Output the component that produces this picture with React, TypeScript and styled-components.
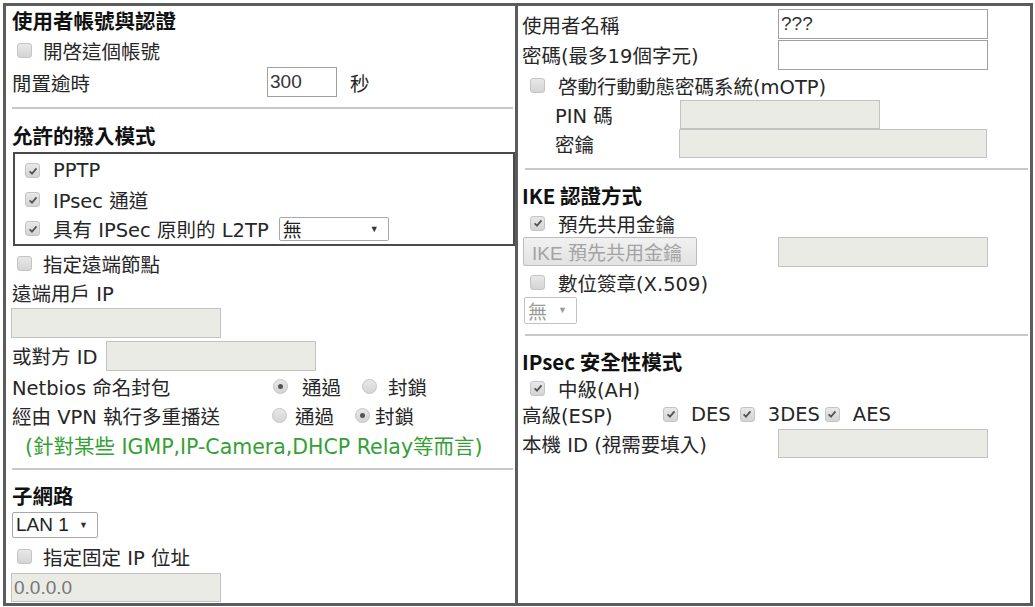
import React from "react"
import styled, { createGlobalStyle } from "styled-components"

const GlobalStyle = createGlobalStyle`
  html, body {
    margin: 0;
    padding: 0;
    background: #fff;
  }
  body {
    font-family: "DejaVu Sans", "Noto Sans CJK TC", sans-serif;
    font-size: 19.5px;
    color: #262626;
  }
`

const Frame = styled.div`
  box-sizing: border-box;
  width: 1030px;
  height: 603px;
  margin: 3px 0 0 3px;
  border: 3px solid #5c5c5c;
  display: grid;
  grid-template-columns: 512px 1fr;
`

const Column = styled.div<{ $pad: string; $divider?: boolean }>`
  box-sizing: border-box;
  display: flex;
  flex-direction: column;
  padding: ${(p) => p.$pad};
  border-right: ${(p) => (p.$divider ? "3px solid #5c5c5c" : "none")};
  min-width: 0;
  overflow: hidden;
`

const Title = styled.div<{ $h: number }>`
  display: flex;
  align-items: center;
  height: ${(p) => p.$h}px;
  flex-shrink: 0;
  font-family: "Noto Sans CJK TC", sans-serif;
  font-weight: 700;
  font-size: 20.5px;
  color: #111;
  white-space: nowrap;
`

const Row = styled.div<{ $h: number; $indent?: number }>`
  display: flex;
  align-items: center;
  height: ${(p) => p.$h}px;
  padding-left: ${(p) => p.$indent ?? 0}px;
  flex-shrink: 0;
  white-space: nowrap;
`

const Label = styled.span<{ $w?: number }>`
  display: inline-block;
  width: ${(p) => (p.$w ? `${p.$w}px` : "auto")};
  flex-shrink: 0;
`

const Divider = styled.div<{ $top: number; $bottom: number; $left?: number }>`
  height: 2px;
  flex-shrink: 0;
  background: #c8c8c8;
  margin: ${(p) => p.$top}px 0 ${(p) => p.$bottom}px ${(p) => p.$left ?? 0}px;
`

const ModeBox = styled.div`
  box-sizing: border-box;
  height: 94px;
  flex-shrink: 0;
  margin: 0 -2px 0 1px;
  border: 2px solid #4a4a4a;
  padding: 2px 0 1px 10px;
  display: flex;
  flex-direction: column;
`

const Mark = styled.span<{ $lead?: number; $gap?: number; $round?: boolean }>`
  box-sizing: border-box;
  display: inline-flex;
  align-items: center;
  justify-content: center;
  width: 15px;
  height: 15px;
  flex-shrink: 0;
  margin-left: ${(p) => p.$lead ?? 0}px;
  margin-right: ${(p) => p.$gap ?? 13}px;
  border: 1px solid #c4c4c4;
  border-radius: ${(p) => (p.$round ? "50%" : "3px")};
  background: linear-gradient(#e8e8e8, #d4d4d4);
`

const Dot = styled.span`
  width: 5px;
  height: 5px;
  border-radius: 50%;
  background: #555;
`

function Check({ on, lead, gap }: { on?: boolean; lead?: number; gap?: number }) {
  return (
    <Mark $lead={lead} $gap={gap}>
      {on && (
        <svg width="10" height="10" viewBox="0 0 10 10">
          <path d="M1.6 5.3 L4 7.6 L8.5 2.3" stroke="#555" strokeWidth="1.8" fill="none" />
        </svg>
      )}
    </Mark>
  )
}

function Radio({ on, lead, gap }: { on?: boolean; lead?: number; gap?: number }) {
  return (
    <Mark $round $lead={lead} $gap={gap}>
      {on && <Dot />}
    </Mark>
  )
}

const TextBox = styled.input<{ $w: number; $h: number; $lead?: number }>`
  box-sizing: border-box;
  width: ${(p) => p.$w}px;
  height: ${(p) => p.$h}px;
  margin: 0 0 0 ${(p) => p.$lead ?? 0}px;
  padding: 0 2px;
  flex-shrink: 0;
  border: 1px solid #a0a0a0;
  border-radius: 0;
  background: #fff;
  font-family: "Liberation Sans", "Noto Sans CJK TC", sans-serif;
  font-size: 19px;
  color: #333;
  outline: none;

  &:disabled {
    background: #ebebe6;
    border-color: #c2c2c2;
    color: #777;
  }
`

const Drop = styled.span<{ $w: number; $h: number; $lead?: number; $off?: boolean }>`
  box-sizing: border-box;
  display: inline-flex;
  align-items: center;
  justify-content: space-between;
  width: ${(p) => p.$w}px;
  height: ${(p) => p.$h}px;
  margin-left: ${(p) => p.$lead ?? 0}px;
  padding: 0 9px 0 3px;
  flex-shrink: 0;
  border: 1px solid ${(p) => (p.$off ? "#c2c2c2" : "#a8a8a8")};
  border-radius: 2px;
  background: #fff;
  font-family: "Liberation Sans", "Noto Sans CJK TC", sans-serif;
  font-size: 19px;
  color: ${(p) => (p.$off ? "#9a9a9a" : "#222")};
`

const Arrow = styled.span<{ $off?: boolean }>`
  font-size: 9px;
  color: ${(p) => (p.$off ? "#999" : "#333")};
`

const GreyButton = styled.button`
  box-sizing: border-box;
  width: 174px;
  height: 29px;
  margin-left: 1px;
  padding: 0 8px;
  border: 1px solid #bdbdbd;
  border-radius: 2px;
  background: linear-gradient(#f1f1f1, #e2e2e2);
  font-family: "Liberation Sans", "Noto Sans CJK TC", sans-serif;
  font-size: 19px;
  color: #a3a3a3;
  text-align: left;
  white-space: nowrap;
`

const Note = styled.span`
  padding-left: 13px;
  font-size: 20.5px;
  color: #34a034;
`

const Unit = styled.span`
  margin-left: 13px;
`

export default function App() {
  return (
    <>
      <GlobalStyle />
      <Frame>
        <Column $pad="0 2px 0 6px" $divider>
          <Title $h={28}>使用者帳號與認證</Title>
          <Row $h={32} $indent={5}>
            <Check gap={11} />
            開啓這個帳號
          </Row>
          <Row $h={32}>
            <Label $w={255}>閒置逾時</Label>
            <TextBox $w={70} $h={30} defaultValue="300" />
            <Unit>秒</Unit>
          </Row>
          <Divider $top={9} $bottom={9} />
          <Title $h={34}>允許的撥入模式</Title>
          <ModeBox>
            <Row $h={29}>
              <Check on />
              PPTP
            </Row>
            <Row $h={29}>
              <Check on />
              IPsec 通道
            </Row>
            <Row $h={29}>
              <Check on />
              具有 IPSec 原則的 L2TP
              <Drop $w={110} $h={24} $lead={10}>
                無<Arrow>▼</Arrow>
              </Drop>
            </Row>
          </ModeBox>
          <Row $h={34} $indent={5}>
            <Check gap={11} />
            指定遠端節點
          </Row>
          <Row $h={25}>遠端用戶 IP</Row>
          <Row $h={35}>
            <TextBox $w={210} $h={30} $lead={-1} disabled />
          </Row>
          <Row $h={31}>
            <Label $w={94}>或對方 ID</Label>
            <TextBox $w={210} $h={30} disabled />
          </Row>
          <Row $h={30}>
            <Label $w={261}>Netbios 命名封包</Label>
            <Radio on gap={14} />
            通過
            <Radio lead={21} gap={11} />
            封鎖
          </Row>
          <Row $h={29}>
            <Label $w={260}>經由 VPN 執行多重播送</Label>
            <Radio gap={8} />
            通過
            <Radio on lead={21} gap={5} />
            封鎖
          </Row>
          <Row $h={30}>
            <Note>(針對某些 IGMP,IP-Camera,DHCP Relay等而言)</Note>
          </Row>
          <Divider $top={8} $bottom={9} />
          <Title $h={32}>子網路</Title>
          <Row $h={28}>
            <Drop $w={86} $h={26}>
              LAN 1<Arrow>▼</Arrow>
            </Drop>
          </Row>
          <Row $h={34} $indent={5}>
            <Check gap={11} />
            指定固定 IP 位址
          </Row>
          <Row $h={29}>
            <TextBox $w={210} $h={29} $lead={-1} disabled defaultValue="0.0.0.0" />
          </Row>
        </Column>

        <Column $pad="3px 2px 0 4px">
          <Row $h={30}>
            <Label $w={256}>使用者名稱</Label>
            <TextBox $w={210} $h={30} defaultValue="???" />
          </Row>
          <Row $h={31}>
            <Label $w={256}>密碼(最多19個字元)</Label>
            <TextBox $w={210} $h={30} type="password" />
          </Row>
          <Row $h={30} $indent={8}>
            <Check />
            啓動行動動態密碼系統(mOTP)
          </Row>
          <Row $h={29} $indent={33}>
            <Label $w={125}>PIN 碼</Label>
            <TextBox $w={200} $h={29} disabled />
          </Row>
          <Row $h={29} $indent={33}>
            <Label $w={124}>密鑰</Label>
            <TextBox $w={308} $h={29} disabled />
          </Row>
          <Divider $top={10} $bottom={10} $left={3} />
          <Title $h={30}>IKE 認證方式</Title>
          <Row $h={26} $indent={8}>
            <Check on />
            預先共用金鑰
          </Row>
          <Row $h={31}>
            <Label $w={256}>
              <GreyButton disabled>IKE 預先共用金鑰</GreyButton>
            </Label>
            <TextBox $w={210} $h={30} disabled />
          </Row>
          <Row $h={30} $indent={8}>
            <Check />
            數位簽章(X.509)
          </Row>
          <Row $h={26}>
            <Drop $w={53} $h={27} $lead={2} $off>
              無<Arrow $off>▼</Arrow>
            </Drop>
          </Row>
          <Divider $top={11} $bottom={10} $left={3} />
          <Title $h={30}>IPsec 安全性模式</Title>
          <Row $h={24} $indent={8}>
            <Check on />
            中級(AH)
          </Row>
          <Row $h={28}>
            <Label $w={141}>高級(ESP)</Label>
            <Check on />
            DES
            <Check on lead={9} />
            3DES
            <Check on lead={5} />
            AES
          </Row>
          <Row $h={30}>
            <Label $w={256}>本機 ID (視需要填入)</Label>
            <TextBox $w={210} $h={29} disabled />
          </Row>
        </Column>
      </Frame>
    </>
  )
}
